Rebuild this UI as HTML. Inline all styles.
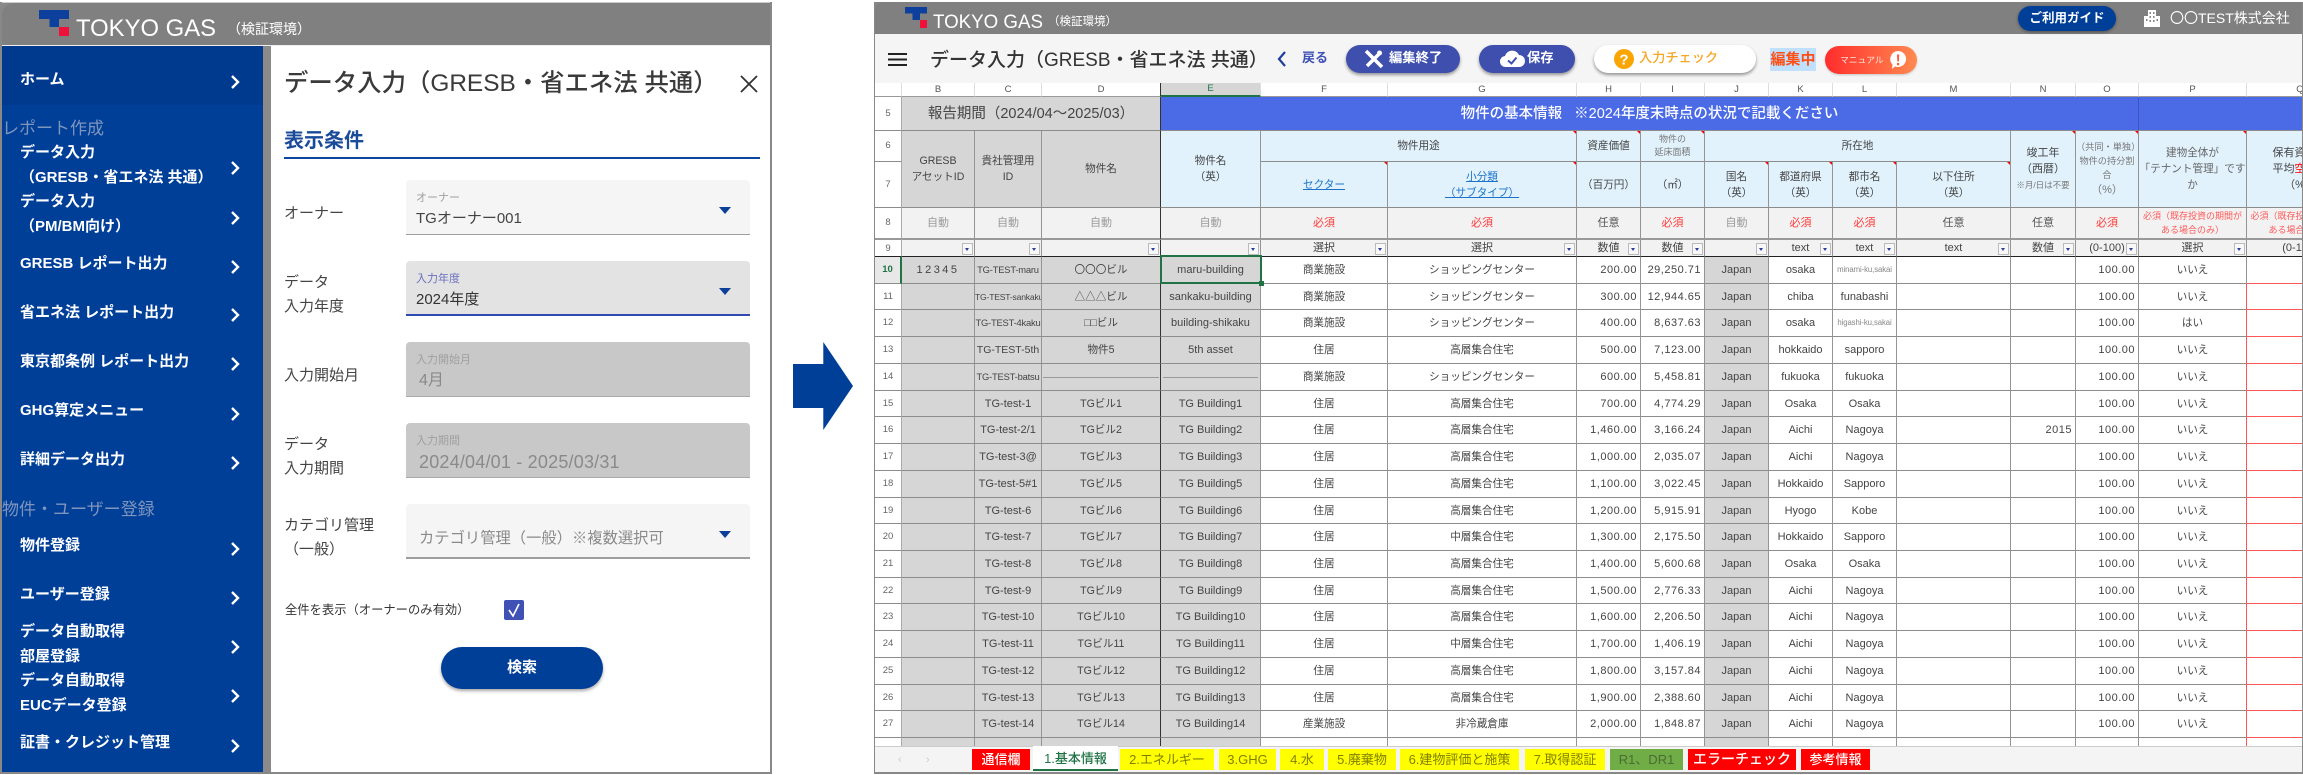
<!DOCTYPE html>
<html lang="ja"><head><meta charset="utf-8"><title>データ入力</title>
<style>
*{box-sizing:border-box}
html,body{margin:0;padding:0;background:#fff}
body{width:2303px;height:774px;position:relative;overflow:hidden;font-family:"Liberation Sans","Noto Sans CJK JP",sans-serif;color:#444}
.a{position:absolute}
.t{position:absolute;white-space:nowrap;line-height:20px}
.s{color:#fff;font-size:15px;font-weight:700;left:20px;margin-top:1.5px}
.m{color:#7f95bd;font-size:17px;left:2px;margin-top:1px}
.lb{font-size:15px;left:284px;color:#444}
.fl{position:absolute;left:406px;width:344px;height:55px;border-radius:4px 4px 0 0}
.sl{font-size:11px;left:416px}
.arw{position:absolute;left:719px;width:0;height:0;border-left:6px solid transparent;border-right:6px solid transparent;border-top:7px solid #0b3f9a}
.btn{position:absolute;top:45px;height:28px;border-radius:14px;box-shadow:0 2px 3px rgba(0,0,0,.4)}
#sh{position:absolute;left:875px;top:83px;width:1427px;height:663px;overflow:hidden;background:#fff}
table{border-collapse:separate;border-spacing:0;table-layout:fixed;width:1479px}
td{padding:0;border-right:1px solid #949494;border-bottom:1px solid #8c8c8c;font-size:10.6px;line-height:16px;text-align:center;position:relative;overflow:hidden;white-space:nowrap;color:#444;vertical-align:middle}
.ch td{font-size:9.5px;line-height:12px;color:#555;border-right-color:#ddd;border-bottom-color:#999;background:#fff}
.rh{background:#fff;font-size:9.5px;color:#666;border-right-color:#aaa}
.hg{background:#d6d6d6}
.lbk{background:#e1f2fd}
.r8 td{background:#f2f2f2;border-bottom:2px solid #999}
.r8 td.rh,.r9 td.rh{background:#fff}
.r9 td{background:#f2f2f2;border-bottom:1px solid #222;line-height:15px;font-size:11px}
.auto{color:#999;font-size:11px}.req{color:#ff3b3b;font-size:11px}.opt{color:#555;font-size:11px}
.sm{font-size:9px;color:#777;line-height:13px}
.f{position:absolute;right:1px;bottom:1px;width:11px;height:12px;background:#f8f8f8;border:1px solid #bbb}
.f:after{content:"";position:absolute;left:2px;top:4px;border-left:2.5px solid transparent;border-right:2.5px solid transparent;border-top:3px solid #2a3f9f}
.cm:before{content:"";position:absolute;right:0;top:0;border-top:3px solid #f00;border-left:3px solid transparent}
.lk{color:#1a73c8;text-decoration:underline}
.d td{font-size:10.6px}
.d td:nth-child(2),.d td:nth-child(3),.d td:nth-child(4),.d td:nth-child(5),.d td:nth-child(10){background:#d6d6d6}
.d td:nth-child(3),.d td:nth-child(5),.d td:nth-child(10),.d td:nth-child(11),.d td:nth-child(12){font-size:11px}
.d td:nth-child(4),.ln{border-right:1px solid #333 !important}
.d td:nth-child(8),.d td:nth-child(9),.d td:nth-child(14),.d td:nth-child(15){text-align:right;padding-right:3px;font-size:11px;letter-spacing:.5px}
.d td:nth-child(16){border-right:1.5px solid #f55}
.d td:nth-child(17){border-bottom:1.5px solid #f55}
.d td.rh{background:#fff;font-size:9.5px;color:#666}
.x td:nth-child(16){border-right:1px solid #949494}
.x td:nth-child(17){border-bottom:1.5px solid #f55}
.d td.xs{font-size:9.4px;letter-spacing:-.2px}
.d td.xx{font-size:7.8px;color:#888;letter-spacing:-.1px}
.tb{position:absolute;top:749px;height:21px;line-height:21px;text-align:center;font-size:13px;white-space:nowrap}
.ye{background:#ff0;color:#808000}.re{background:#f00;color:#fff;font-weight:500}
</style></head><body>

<!-- LEFT PANEL -->
<div class="a" style="left:0;top:2px;width:772px;height:772px;background:#888"></div>
<div class="a" style="left:2px;top:2px;width:768px;height:1px;background:#ccc"></div>
<div class="a" style="left:2px;top:3px;width:768px;height:42px;background:#808080;border-top-left-radius:12px"></div>
<div class="a" style="left:2px;top:45px;width:768px;height:1px;background:#eee"></div>
<svg class="a" style="left:0;top:0" width="240" height="46"><path d="M39 10h30v9H59v8h-9.5v-8H39z" fill="#0d3f9c"/><rect x="59" y="27" width="10" height="9" fill="#f0113a"/><text x="76" y="36" font-family="Liberation Sans" font-size="24" fill="#fff" textLength="140" lengthAdjust="spacingAndGlyphs">TOKYO GAS</text></svg>
<div class="t" style="left:227px;top:19px;color:#fff;font-size:14px">（検証環境）</div>

<div class="a" style="left:2px;top:46px;width:261px;height:726px;background:#003f98"></div>
<div class="a" style="left:2px;top:46px;width:261px;height:59px;background:#003a8f"></div>
<div class="a" style="left:263px;top:46px;width:8px;height:726px;background:#8a8a8a"></div>
<div class="a" style="left:271px;top:46px;width:499px;height:726px;background:#fff"></div>

<div class="t s" style="top:68px">ホーム</div>
<div class="t m" style="top:118px">レポート作成</div>
<div class="t s" style="top:141px">データ入力</div>
<div class="t s" style="top:166px">（GRESB・省エネ法 共通）</div>
<div class="t s" style="top:190px">データ入力</div>
<div class="t s" style="top:215px">（PM/BM向け）</div>
<div class="t s" style="top:252px">GRESB レポート出力</div>
<div class="t s" style="top:301px">省エネ法 レポート出力</div>
<div class="t s" style="top:350px">東京都条例 レポート出力</div>
<div class="t s" style="top:399px">GHG算定メニュー</div>
<div class="t s" style="top:448px">詳細データ出力</div>
<div class="t m" style="top:499px">物件・ユーザー登録</div>
<div class="t s" style="top:534px">物件登録</div>
<div class="t s" style="top:583px">ユーザー登録</div>
<div class="t s" style="top:620px">データ自動取得</div>
<div class="t s" style="top:645px">部屋登録</div>
<div class="t s" style="top:669px">データ自動取得</div>
<div class="t s" style="top:694px">EUCデータ登録</div>
<div class="t s" style="top:731px">証書・クレジット管理</div>
<svg class="a" style="left:229px;top:1px" width="14" height="774" fill="none" stroke="#fff" stroke-width="2.4">
<path d="M3 75l6 6-6 6M3 161l6 6-6 6M3 211l6 6-6 6M3 260l6 6-6 6M3 308l6 6-6 6M3 357l6 6-6 6M3 407l6 6-6 6M3 456l6 6-6 6M3 542l6 6-6 6M3 591l6 6-6 6M3 640l6 6-6 6M3 689l6 6-6 6M3 739l6 6-6 6"/></svg>

<div class="t" style="left:284px;top:69px;font-size:24.4px;line-height:30px;font-weight:500;color:#3a3a3a">データ入力（GRESB・省エネ法 共通）</div>
<svg class="a" style="left:740px;top:75px" width="18" height="18" fill="none" stroke="#333" stroke-width="1.8"><path d="M1 1l16 16M17 1L1 17"/></svg>
<div class="t" style="left:284px;top:131px;font-size:20px;font-weight:700;color:#1a4a9a">表示条件</div>
<div class="a" style="left:284px;top:157px;width:476px;height:2px;background:#0b46a0"></div>

<div class="t lb" style="top:204px">オーナー</div>
<div class="fl" style="top:180px;background:#f5f5f5;border-bottom:1.5px solid #9e9e9e"></div>
<div class="t sl" style="top:188px;color:#a0a0a0">オーナー</div>
<div class="t" style="left:416px;top:209px;font-size:15px;color:#444">TGオーナー001</div>
<div class="arw" style="top:207px"></div>

<div class="t lb" style="top:273px">データ</div>
<div class="t lb" style="top:297px">入力年度</div>
<div class="fl" style="top:261px;background:#e3e3e3;border-bottom:2px solid #2f49b5"></div>
<div class="t sl" style="top:269px;color:#6a6fbd">入力年度</div>
<div class="t" style="left:416px;top:290px;font-size:15px;color:#333">2024年度</div>
<div class="arw" style="top:288px"></div>

<div class="t lb" style="top:366px">入力開始月</div>
<div class="fl" style="top:342px;background:#c8c8c8;border-bottom:1px solid #aaa"></div>
<div class="t sl" style="top:350px;color:#a0a0a0">入力開始月</div>
<div class="t" style="left:419px;top:371px;font-size:16px;color:#8a8a8a">4月</div>

<div class="t lb" style="top:435px">データ</div>
<div class="t lb" style="top:459px">入力期間</div>
<div class="fl" style="top:423px;background:#c8c8c8;border-bottom:1px solid #aaa"></div>
<div class="t sl" style="top:431px;color:#a0a0a0">入力期間</div>
<div class="t" style="left:419px;top:452px;font-size:18px;letter-spacing:.2px;color:#8a8a8a">2024/04/01 - 2025/03/31</div>

<div class="t lb" style="top:516px">カテゴリ管理</div>
<div class="t lb" style="top:540px">（一般）</div>
<div class="fl" style="top:504px;background:#f5f5f5;border-bottom:2px solid #9e9e9e"></div>
<div class="t" style="left:419px;top:529px;font-size:15.3px;color:#8a8a8a">カテゴリ管理（一般）※複数選択可</div>
<div class="arw" style="top:531px"></div>

<div class="t" style="left:285px;top:600px;font-size:12.3px;color:#333">全件を表示（オーナーのみ有効）</div>
<svg class="a" style="left:504px;top:600px" width="20" height="20"><rect width="20" height="20" rx="2" fill="#3f51b5"/><path d="M5 10l4 6 6-12" fill="none" stroke="#fff" stroke-width="1.6"/></svg>
<div class="a" style="left:441px;top:647px;width:162px;height:42px;border-radius:21px;background:#003f98;box-shadow:0 2px 3px rgba(0,0,0,.35);color:#fff;font-weight:700;font-size:15px;line-height:42px;text-align:center">検索</div>

<!-- ARROW -->
<svg class="a" style="left:790px;top:340px" width="66" height="92"><path d="M3 24h30.300V2L63 46 33.300 90V68H3z" fill="#003f98"/></svg>

<!-- RIGHT PANEL -->
<div class="a" style="left:874px;top:2px;width:1429px;height:772px;background:#888"></div>
<div class="a" style="left:875px;top:2px;width:1427px;height:32px;background:#808080;border-top-left-radius:8px"></div>
<div class="a" style="left:875px;top:34px;width:1427px;height:49px;background:#f5f5f5"></div>
<svg class="a" style="left:900px;top:0" width="150" height="34"><path d="M5 7h22v6.500h-7v6.500h-7.500v-6.500H5z" fill="#0d3f9c"/><rect x="20" y="20" width="7" height="8" fill="#f0113a"/><text x="33" y="28" font-family="Liberation Sans" font-size="19" fill="#fff" textLength="110" lengthAdjust="spacingAndGlyphs">TOKYO GAS</text></svg>
<div class="t" style="left:1048px;top:12px;color:#fff;font-size:11.5px">（検証環境）</div>

<div class="a" style="left:2018px;top:6px;width:98px;height:25px;border-radius:13px;background:#003f98;color:#fff;font-weight:700;font-size:12.5px;line-height:24px;text-align:center;box-shadow:0 1px 3px rgba(0,0,0,.4)">ご利用ガイド</div>
<svg class="a" style="left:2144px;top:10px" width="16" height="17"><path d="M4 0h8v6h4v11H0V6h4z" fill="#fff"/><path d="M5.500 2h1.500v2H5.500zM9 2h1.500v2H9zM5.500 6h1.500v2H5.500zM9 6h1.500v2H9zM2 9h1.500v2H2zM5.500 10h1.500v2H5.500zM9 10h1.500v2H9zM12.500 9H14v2h-1.500z" fill="#888"/></svg>
<div class="t" style="left:2170px;top:8px;color:#fff;font-size:14px">〇〇TEST株式会社</div>

<svg class="a" style="left:888px;top:53px" width="19" height="13"><path d="M0 1h19M0 6.500h19M0 12h19" stroke="#222" stroke-width="2"/></svg>
<div class="t" style="left:930px;top:46px;font-size:19px;line-height:30px;font-weight:500;color:#333">データ入力（GRESB・省エネ法 共通）</div>
<svg class="a" style="left:1277px;top:50px" width="10" height="18" fill="none" stroke="#1d3f9a" stroke-width="2.2"><path d="M8 2L2 9l6 7"/></svg>
<div class="t" style="left:1302px;top:48px;font-size:13px;font-weight:700;color:#3f51b5">戻る</div>

<div class="btn" style="left:1346px;width:114px;background:#3f4fae"></div>
<svg class="a" style="left:1364px;top:49px" width="20" height="20" stroke="#fff" stroke-width="3.5" fill="none"><path d="M2 2l16 16M17 3L3 17"/><circle cx="15.500" cy="4" r="2.500" fill="#fff" stroke="none"/></svg>
<div class="t" style="left:1389px;top:48px;color:#fff;font-weight:700;font-size:13.3px">編集終了</div>

<div class="btn" style="left:1479px;width:96px;background:#3f4fae"></div>
<svg class="a" style="left:1500px;top:50px" width="25" height="18"><path d="M6 17a5.500 5.500 0 0 1-1-11 7.500 7.500 0 0 1 14-1 6 6 0 0 1 0 12z" fill="#fff"/><path d="M8 10.500l3.500 3 5-6" fill="none" stroke="#3f4fae" stroke-width="2"/></svg>
<div class="t" style="left:1527px;top:48px;color:#fff;font-weight:700;font-size:13.3px">保存</div>

<div class="btn" style="left:1594px;width:162px;background:#fff"></div>
<svg class="a" style="left:1614px;top:49px" width="20" height="20"><circle cx="10" cy="10" r="10" fill="#f9a603"/><text x="10" y="15.500" text-anchor="middle" font-family="Liberation Sans" font-weight="700" font-size="15" fill="#fff">?</text></svg>
<div class="t" style="left:1639px;top:48px;color:#f5a623;font-size:13.2px;font-weight:500">入力チェック</div>

<div class="a" style="left:1770px;top:48px;width:46px;height:23px;background:#bfe0ff;color:#ff4f14;font-weight:700;font-size:15px;line-height:23px;text-align:center;white-space:nowrap">編集中</div>
<div class="a" style="left:1825px;top:46px;width:92px;height:28px;border-radius:14px;background:linear-gradient(90deg,#ff2d2d,#ff8a50);box-shadow:0 1px 2px rgba(0,0,0,.2)"></div>
<div class="t" style="left:1840px;top:50px;font-size:8.8px;color:#ffe6de">マニュアル</div>
<svg class="a" style="left:1889px;top:51px" width="19" height="19"><path d="M9 0a8 8 0 1 1-3 15.400L3 18l.5-4.500A8 8 0 0 1 9 0z" fill="#fff"/><path d="M8 3.500h2.200l-.3 7H8.300zM8 12h2.200v2.200H8z" fill="#ff5a3c"/></svg>

<!-- SPREADSHEET -->
<div id="sh">
<table>
<colgroup><col style="width:27px"><col style="width:73px"><col style="width:67px"><col style="width:119px"><col style="width:100px"><col style="width:127px"><col style="width:189px"><col style="width:64px"><col style="width:64px"><col style="width:64px"><col style="width:64px"><col style="width:64px"><col style="width:114px"><col style="width:65px"><col style="width:63px"><col style="width:108px"><col style="width:107px"></colgroup>
<tr class="ch" style="height:13px"><td style="background:#fff"></td><td>B</td><td>C</td><td class="ln">D</td><td style="background:#d6d6d6;color:#217346;border-bottom:2px solid #217346">E</td><td>F</td><td>G</td><td>H</td><td>I</td><td>J</td><td>K</td><td>L</td><td>M</td><td>N</td><td>O</td><td>P</td><td>Q</td></tr>
<tr style="height:34px"><td class="rh">5</td><td colspan="3" class="hg ln" style="font-size:14.5px">報告期間（2024/04～2025/03）</td><td colspan="11" style="background:#4a6ae6;color:#fff;font-size:14.5px;font-weight:500;border-right-color:#3a56c0">物件の基本情報&nbsp;&nbsp;&nbsp;※2024年度末時点の状況で記載ください</td><td colspan="2" style="background:#4a6ae6"></td></tr>
<tr style="height:31px"><td class="rh">6</td><td rowspan="2" class="hg">GRESB<br>アセットID</td><td rowspan="2" class="hg">貴社管理用<br>ID</td><td rowspan="2" class="hg ln">物件名</td><td rowspan="2" class="lbk">物件名<br>（英）</td><td colspan="2" class="lbk cm">物件用途</td><td class="lbk cm">資産価値</td><td class="lbk cm sm">物件の<br>延床面積</td><td colspan="4" class="lbk">所在地</td><td rowspan="2" class="lbk cm" style="font-size:11px">竣工年<br>（西暦）<br><span class="sm" style="font-size:8.5px">※月/日は不要</span></td><td rowspan="2" class="lbk cm sm" style="font-size:9.2px;line-height:14px">（共同・単独）<br>物件の持分割<br>合<br><span style="font-size:11px;line-height:16px">（%）</span></td><td rowspan="2" class="lbk cm" style="color:#666">建物全体が<br>「テナント管理」です<br>か</td><td rowspan="2" class="lbk" style="font-size:11px">保有資産の<br>平均<span style="color:#f00">空室</span>率<br>（%）</td></tr>
<tr style="height:46px"><td class="rh">7</td><td class="lbk cm"><span class="lk">セクター</span></td><td class="lbk cm"><span class="lk">小分類<br>（サブタイプ）</span></td><td class="lbk">（百万円）</td><td class="lbk">（㎡）</td><td class="lbk cm">国名<br>（英）</td><td class="lbk cm">都道府県<br>（英）</td><td class="lbk cm">都市名<br>（英）</td><td class="lbk cm">以下住所<br>（英）</td></tr>
<tr class="r8" style="height:32px"><td class="rh">8</td><td class="auto">自動</td><td class="auto">自動</td><td class="auto ln">自動</td><td class="auto">自動</td><td class="req">必須</td><td class="req">必須</td><td class="opt">任意</td><td class="req">必須</td><td class="auto">自動</td><td class="req">必須</td><td class="req">必須</td><td class="opt">任意</td><td class="opt">任意</td><td class="req">必須</td><td style="font-size:9px;color:#ff5a5a;line-height:14px">必須（既存投資の期間が<br>ある場合のみ）</td><td style="font-size:9px;color:#ff5a5a;line-height:14px">必須（既存投資の期間が<br>ある場合のみ）</td></tr>
<tr class="r9" style="height:17px"><td class="rh" style="font-size:9.5px">9</td><td><i class="f"></i></td><td><i class="f"></i></td><td class="ln"><i class="f"></i></td><td><i class="f"></i></td><td>選択<i class="f"></i></td><td>選択<i class="f"></i></td><td>数値<i class="f"></i></td><td>数値<i class="f"></i></td><td><i class="f"></i></td><td>text<i class="f"></i></td><td>text<i class="f"></i></td><td>text<i class="f"></i></td><td>数値<i class="f"></i></td><td>(0-100)<i class="f"></i></td><td>選択<i class="f"></i></td><td>(0-100)<i class="f"></i></td></tr>
<tr class="d x" style="height:27px"><td class="rh" style="background:#e8e8e8;color:#217346;font-weight:700;border-right:2px solid #217346">10</td><td style="letter-spacing:2.5px;font-size:11px">12345</td><td class="xs">TG-TEST-maru</td><td>〇〇〇ビル</td><td>maru-building</td><td>商業施設</td><td>ショッピングセンター</td><td>200.00</td><td>29,250.71</td><td>Japan</td><td>osaka</td><td class="xx">minami-ku,sakai</td><td></td><td></td><td>100.00</td><td>いいえ</td><td></td></tr>
<tr class="d" style="height:26px"><td class="rh">11</td><td></td><td class="xs" style="font-size:8.6px">TG-TEST-sankaku</td><td>△△△ビル</td><td>sankaku-building</td><td>商業施設</td><td>ショッピングセンター</td><td>300.00</td><td>12,944.65</td><td>Japan</td><td>chiba</td><td>funabashi</td><td></td><td></td><td>100.00</td><td>いいえ</td><td></td></tr>
<tr class="d" style="height:27px"><td class="rh">12</td><td></td><td class="xs">TG-TEST-4kaku</td><td>□□ビル</td><td>building-shikaku</td><td>商業施設</td><td>ショッピングセンター</td><td>400.00</td><td>8,637.63</td><td>Japan</td><td>osaka</td><td class="xx">higashi-ku,sakai</td><td></td><td></td><td>100.00</td><td>はい</td><td></td></tr>
<tr class="d" style="height:27px"><td class="rh">13</td><td></td><td style="font-size:10.5px">TG-TEST-5th</td><td>物件5</td><td>5th asset</td><td>住居</td><td>高層集合住宅</td><td>500.00</td><td>7,123.00</td><td>Japan</td><td>hokkaido</td><td>sapporo</td><td></td><td></td><td>100.00</td><td>いいえ</td><td></td></tr>
<tr class="d" style="height:27px"><td class="rh">14</td><td></td><td class="xs">TG-TEST-batsu</td><td><div style="height:1px;background:#999;margin:0 1px"></div></td><td><div style="height:1px;background:#999;margin:0 2px"></div></td><td>商業施設</td><td>ショッピングセンター</td><td>600.00</td><td>5,458.81</td><td>Japan</td><td>fukuoka</td><td>fukuoka</td><td></td><td></td><td>100.00</td><td>いいえ</td><td></td></tr>
<tr class="d" style="height:26px"><td class="rh">15</td><td></td><td>TG-test-1</td><td>TGビル1</td><td>TG Building1</td><td>住居</td><td>高層集合住宅</td><td>700.00</td><td>4,774.29</td><td>Japan</td><td>Osaka</td><td>Osaka</td><td></td><td></td><td>100.00</td><td>いいえ</td><td></td></tr>
<tr class="d" style="height:27px"><td class="rh">16</td><td></td><td>TG-test-2/1</td><td>TGビル2</td><td>TG Building2</td><td>住居</td><td>高層集合住宅</td><td>1,460.00</td><td>3,166.24</td><td>Japan</td><td>Aichi</td><td>Nagoya</td><td></td><td>2015</td><td>100.00</td><td>いいえ</td><td></td></tr>
<tr class="d" style="height:27px"><td class="rh">17</td><td></td><td>TG-test-3@</td><td>TGビル3</td><td>TG Building3</td><td>住居</td><td>高層集合住宅</td><td>1,000.00</td><td>2,035.07</td><td>Japan</td><td>Aichi</td><td>Nagoya</td><td></td><td></td><td>100.00</td><td>いいえ</td><td></td></tr>
<tr class="d" style="height:27px"><td class="rh">18</td><td></td><td>TG-test-5#1</td><td>TGビル5</td><td>TG Building5</td><td>住居</td><td>高層集合住宅</td><td>1,100.00</td><td>3,022.45</td><td>Japan</td><td>Hokkaido</td><td>Sapporo</td><td></td><td></td><td>100.00</td><td>いいえ</td><td></td></tr>
<tr class="d" style="height:26px"><td class="rh">19</td><td></td><td>TG-test-6</td><td>TGビル6</td><td>TG Building6</td><td>住居</td><td>高層集合住宅</td><td>1,200.00</td><td>5,915.91</td><td>Japan</td><td>Hyogo</td><td>Kobe</td><td></td><td></td><td>100.00</td><td>いいえ</td><td></td></tr>
<tr class="d" style="height:27px"><td class="rh">20</td><td></td><td>TG-test-7</td><td>TGビル7</td><td>TG Building7</td><td>住居</td><td>中層集合住宅</td><td>1,300.00</td><td>2,175.50</td><td>Japan</td><td>Hokkaido</td><td>Sapporo</td><td></td><td></td><td>100.00</td><td>いいえ</td><td></td></tr>
<tr class="d" style="height:27px"><td class="rh">21</td><td></td><td>TG-test-8</td><td>TGビル8</td><td>TG Building8</td><td>住居</td><td>高層集合住宅</td><td>1,400.00</td><td>5,600.68</td><td>Japan</td><td>Osaka</td><td>Osaka</td><td></td><td></td><td>100.00</td><td>いいえ</td><td></td></tr>
<tr class="d" style="height:26px"><td class="rh">22</td><td></td><td>TG-test-9</td><td>TGビル9</td><td>TG Building9</td><td>住居</td><td>高層集合住宅</td><td>1,500.00</td><td>2,776.33</td><td>Japan</td><td>Aichi</td><td>Nagoya</td><td></td><td></td><td>100.00</td><td>いいえ</td><td></td></tr>
<tr class="d" style="height:27px"><td class="rh">23</td><td></td><td>TG-test-10</td><td>TGビル10</td><td>TG Building10</td><td>住居</td><td>高層集合住宅</td><td>1,600.00</td><td>2,206.50</td><td>Japan</td><td>Aichi</td><td>Nagoya</td><td></td><td></td><td>100.00</td><td>いいえ</td><td></td></tr>
<tr class="d" style="height:27px"><td class="rh">24</td><td></td><td>TG-test-11</td><td>TGビル11</td><td>TG Building11</td><td>住居</td><td>中層集合住宅</td><td>1,700.00</td><td>1,406.19</td><td>Japan</td><td>Aichi</td><td>Nagoya</td><td></td><td></td><td>100.00</td><td>いいえ</td><td></td></tr>
<tr class="d" style="height:27px"><td class="rh">25</td><td></td><td>TG-test-12</td><td>TGビル12</td><td>TG Building12</td><td>住居</td><td>高層集合住宅</td><td>1,800.00</td><td>3,157.84</td><td>Japan</td><td>Aichi</td><td>Nagoya</td><td></td><td></td><td>100.00</td><td>いいえ</td><td></td></tr>
<tr class="d" style="height:26px"><td class="rh">26</td><td></td><td>TG-test-13</td><td>TGビル13</td><td>TG Building13</td><td>住居</td><td>高層集合住宅</td><td>1,900.00</td><td>2,388.60</td><td>Japan</td><td>Aichi</td><td>Nagoya</td><td></td><td></td><td>100.00</td><td>いいえ</td><td></td></tr>
<tr class="d" style="height:27px"><td class="rh">27</td><td></td><td>TG-test-14</td><td>TGビル14</td><td>TG Building14</td><td>産業施設</td><td>非冷蔵倉庫</td><td>2,000.00</td><td>1,848.87</td><td>Japan</td><td>Aichi</td><td>Nagoya</td><td></td><td></td><td>100.00</td><td>いいえ</td><td></td></tr>
<tr class="d" style="height:27px"><td class="rh">28</td><td></td><td></td><td></td><td></td><td></td><td></td><td></td><td></td><td></td><td></td><td></td><td></td><td></td><td></td><td></td><td></td></tr>
</table>
<div class="a" style="left:285px;top:172px;width:102px;height:29px;border:2px solid #217346"></div>
<div class="a" style="left:384px;top:198px;width:5px;height:5px;background:#217346"></div>
</div>

<!-- TABS -->
<div class="a" style="left:875px;top:746px;width:1427px;height:26px;background:#f4f4f4;border-top:1px solid #ccc"></div>
<div class="t" style="left:898px;top:750px;color:#ccc;font-size:11px">‹</div>
<div class="t" style="left:926px;top:750px;color:#ccc;font-size:11px">›</div>
<div class="tb re" style="left:972px;width:58px">通信欄</div>
<div class="tb" style="left:1033px;width:85px;top:746px;height:25px;line-height:25px;background:#fff;color:#217346;font-weight:500;border-bottom:2px solid #217346">1.基本情報</div>
<div class="tb ye" style="left:1120px;width:94px">2.エネルギー</div>
<div class="tb ye" style="left:1219px;width:57px">3.GHG</div>
<div class="tb ye" style="left:1280px;width:44px">4.水</div>
<div class="tb ye" style="left:1328px;width:68px">5.廃棄物</div>
<div class="tb ye" style="left:1400px;width:119px">6.建物評価と施策</div>
<div class="tb ye" style="left:1525px;width:80px">7.取得認証</div>
<div class="tb" style="left:1610px;width:73px;background:#70ad47;color:#4b6b33">R1、DR1</div>
<div class="tb re" style="left:1688px;width:108px;font-size:14px">エラーチェック</div>
<div class="tb re" style="left:1801px;width:69px">参考情報</div>
</body></html>
